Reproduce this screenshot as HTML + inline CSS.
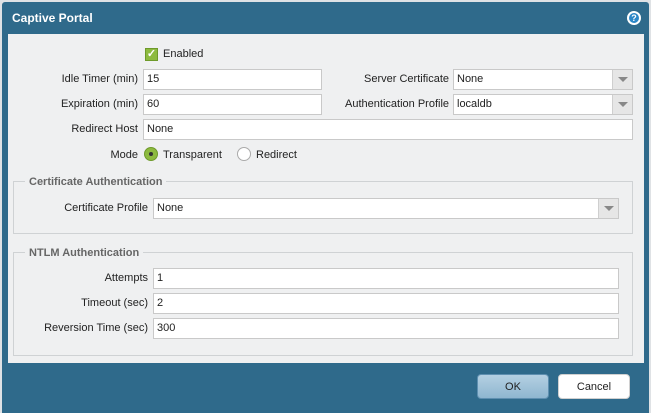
<!DOCTYPE html>
<html><head><style>
*{box-sizing:border-box;margin:0;padding:0}
body{width:651px;height:413px;background:#dfe2e5;font-family:"Liberation Sans",sans-serif;font-size:11px;color:#222;position:relative;overflow:hidden}
.dlg{position:absolute;left:2px;top:2px;width:647px;height:411px;background:#2f6a8b;border-radius:3px 3px 0 0}
.title{position:absolute;left:10px;top:9px;color:#fff;font-weight:bold;font-size:12px}
.help{position:absolute;left:625px;top:9px;width:14px;height:14px;border-radius:50%;background:#fff;}
.help:after{content:"";position:absolute;left:2px;top:2px;width:10px;height:10px;border-radius:50%;background:#2d88c8}
.help span{position:absolute;left:0;top:0;width:14px;text-align:center;color:#fff;font-weight:bold;font-size:9px;line-height:14px;z-index:1}
.body{position:absolute;left:8px;top:34px;width:636px;height:329px;background:#eff0f1}
.a{position:absolute}
.lbl{position:absolute;text-align:right;line-height:20px}
.in{position:absolute;height:21px;background:#fff;border:1px solid #c9c9c9;line-height:19px;padding-left:3px}
.arr{position:absolute;right:0;top:0;width:20px;height:19px;background:#e6e6e6;border-left:1px solid #cfcfcf}
.arr:after{content:"";position:absolute;left:5px;top:7px;border-left:5px solid transparent;border-right:5px solid transparent;border-top:5px solid #888}
fieldset{position:absolute;border:1px solid #cfd2d4}
.lg{position:absolute;background:#eff0f1;color:#666;font-weight:bold;padding:0 4px;line-height:14px}
.btn{position:absolute;top:374px;width:72px;height:25px;border-radius:4px;text-align:center;line-height:25px}
</style></head><body>
<div class="dlg">
<div class="title">Captive Portal</div>
<div class="help"><span>?</span></div>
</div>
<div class="body"></div>
<div class="a" style="left:145px;top:48px;width:13px;height:13px;background:#8dba3f;border:1px solid #6e9a2a;color:#fff;font-size:11px;line-height:11px;text-align:center;font-weight:bold">✓</div>
<div class="a" style="left:163px;top:45px;line-height:18px">Enabled</div>

<div class="lbl" style="right:513px;top:69px">Idle Timer (min)</div>
<div class="in" style="left:143px;top:69px;width:179px">15</div>
<div class="lbl" style="right:202px;top:69px">Server Certificate</div>
<div class="in" style="left:453px;top:69px;width:180px">None<div class="arr"></div></div>

<div class="lbl" style="right:513px;top:94px">Expiration (min)</div>
<div class="in" style="left:143px;top:94px;width:179px">60</div>
<div class="lbl" style="right:202px;top:94px">Authentication Profile</div>
<div class="in" style="left:453px;top:94px;width:180px">localdb<div class="arr"></div></div>

<div class="lbl" style="right:513px;top:119px">Redirect Host</div>
<div class="in" style="left:143px;top:119px;width:490px">None</div>

<div class="lbl" style="right:513px;top:145px">Mode</div>
<div class="a" style="left:144px;top:147px;width:14px;height:14px;border-radius:50%;background:#8dba3f;border:1px solid #6e9a2a"><div style="position:absolute;left:4px;top:4px;width:4px;height:4px;border-radius:50%;background:#333"></div></div>
<div class="a" style="left:163px;top:145px;line-height:20px">Transparent</div>
<div class="a" style="left:237px;top:147px;width:14px;height:14px;border-radius:50%;background:#fff;border:1px solid #aaa"></div>
<div class="a" style="left:256px;top:145px;line-height:20px">Redirect</div>

<fieldset style="left:13px;top:181px;width:620px;height:53px"></fieldset>
<div class="lg" style="left:25px;top:175px">Certificate Authentication</div>
<div class="lbl" style="right:503px;top:198px">Certificate Profile</div>
<div class="in" style="left:153px;top:198px;width:466px">None<div class="arr"></div></div>

<fieldset style="left:13px;top:252px;width:620px;height:104px"></fieldset>
<div class="lg" style="left:25px;top:246px">NTLM Authentication</div>
<div class="lbl" style="right:503px;top:268px">Attempts</div>
<div class="in" style="left:153px;top:268px;width:466px">1</div>
<div class="lbl" style="right:503px;top:293px">Timeout (sec)</div>
<div class="in" style="left:153px;top:293px;width:466px">2</div>
<div class="lbl" style="right:503px;top:318px">Reversion Time (sec)</div>
<div class="in" style="left:153px;top:318px;width:466px">300</div>

<div class="btn" style="left:477px;background:linear-gradient(#b4d0e2,#8fb6d0);border:1px solid #5e8fb0">OK</div>
<div class="btn" style="left:558px;background:#fff;border:1px solid #d0d0d0">Cancel</div>
</body></html>
